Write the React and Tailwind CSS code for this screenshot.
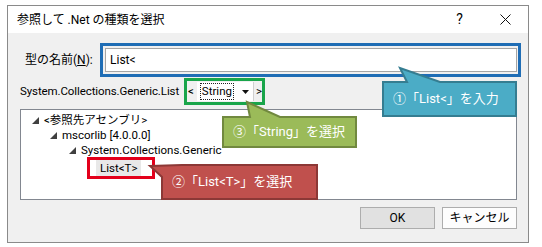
const font = { fontFamily: 'Roboto, "Noto Sans CJK JP", sans-serif' };

function TreeArrow() {
  return (
    <svg width="7" height="7" viewBox="0 0 7 7" className="shrink-0">
      <polygon points="7,0 7,7 0,7" fill="#404040" />
    </svg>
  );
}

function TreeRow({ indent, children }) {
  return (
    <div className="flex items-center h-[15px]" style={{ paddingLeft: indent }}>
      <TreeArrow />
      <span className="ml-[5px] leading-[13px]">{children}</span>
    </div>
  );
}

function Callouts() {
  return (
    <>
      <svg className="absolute inset-0 pointer-events-none" width="542" height="247">
        <polygon
          points="383,82 407,82 400,68 440,82 516,82 516,116 383,116"
          fill="#4bacc6"
          stroke="#357d91"
          strokeWidth="2"
        />
        <polygon
          points="223,117 250,117 247,102 280,117 356,117 356,147 223,147"
          fill="#9bbb59"
          stroke="#71893f"
          strokeWidth="2"
        />
        <polygon
          points="150,166 182,165 317,165 317,199 162,199 162,177"
          fill="#c0504d"
          stroke="#8c3836"
          strokeWidth="2"
        />
      </svg>
      <div className="absolute left-[383px] top-[82px] w-[133px] h-[34px] flex items-center pl-[10px] text-white text-[13px] whitespace-nowrap">
        ①「List&lt;」を入力
      </div>
      <div className="absolute left-[223px] top-[117px] w-[133px] h-[30px] flex items-center pl-[10px] text-white text-[13px] whitespace-nowrap">
        ③「String」を選択
      </div>
      <div className="absolute left-[162px] top-[165px] w-[155px] h-[34px] flex items-center pl-[10px] text-white text-[13px] whitespace-nowrap">
        ②「List&lt;T&gt;」を選択
      </div>
    </>
  );
}

export default function App() {
  return (
    <div className="relative w-[542px] h-[247px] bg-white overflow-hidden text-[12px] text-black" style={font}>
      <div className="ml-[7px] mt-[5px] w-[522px] h-[238px] border border-[#8a8a8a] flex flex-col">
        {/* title bar */}
        <div className="h-[27px] bg-white flex items-center shrink-0">
          <div className="pl-[9px] whitespace-nowrap">参照して .Net の種類を選択</div>
          <div className="ml-auto flex h-full">
            <div className="w-[45px] flex items-center justify-center text-[14px]">?</div>
            <div className="w-[46px] flex items-center justify-center">
              <svg width="11" height="11" viewBox="0 0 11 11">
                <path d="M0.5 0.5 L10.5 10.5 M10.5 0.5 L0.5 10.5" stroke="#111" strokeWidth="1" />
              </svg>
            </div>
          </div>
        </div>

        {/* body */}
        <div className="flex-1 bg-[#f0f0f0] flex flex-col">
          <div className="mt-[10px] flex items-center h-[34px]">
            <div className="w-[92px] pl-[17px] whitespace-nowrap">
              型の名前(<span className="underline">N</span>):
            </div>
            <div className="w-[421px] h-[34px] border-[3px] border-[#1f6db5] p-[2px] pr-[1px]">
              <div className="h-full bg-white border border-[#a5a5a5] flex items-center pl-[4px]">List&lt;</div>
            </div>
          </div>

          <div className="mt-[1px] h-[27px] flex items-center text-[11.5px]">
            <div className="w-[176px] pl-[12px] whitespace-nowrap tracking-[-0.1px]">System.Collections.Generic.List</div>
            <div className="w-[81px] h-[27px] border-[3px] border-[#19a54a] flex items-center pl-[1px]">
              <span>&lt;</span>
              <div className="ml-[3px] w-[59px] h-[19px] bg-white flex items-center border-r border-[#d0d0d0]">
                <span className="ml-[3px] px-[1px] leading-[15px] border border-dotted border-[#222]">String</span>
                <svg width="7" height="4" viewBox="0 0 7 4" className="ml-auto mr-[4px]">
                  <polygon points="0,0 7,0 3.5,4" fill="#111" />
                </svg>
              </div>
              <span className="ml-[2px]">&gt;</span>
            </div>
          </div>

          <div className="mt-[4px] ml-[12px] mr-[11px] h-[91px] border border-[#828790] bg-white pt-[3px] text-[11.5px]">
            <TreeRow indent={11}>&lt;参照先アセンブリ&gt;</TreeRow>
            <TreeRow indent={29}>mscorlib [4.0.0.0]</TreeRow>
            <TreeRow indent={48}>System.Collections.Generic</TreeRow>
            <div className="-mt-[1px] pl-[66px] flex">
              <div className="w-[68px] h-[22px] border-[3px] border-[#e3001b] flex items-center pl-[6px]">
                <span className="bg-[#e8e8e8] px-[4px] leading-[16px]">List&lt;T&gt;</span>
              </div>
            </div>
          </div>

          <div className="mt-[7px] flex justify-end gap-[7px] pr-[11px]">
            <div className="w-[75px] h-[22px] bg-[#e1e1e1] border border-[#adadad] flex items-center justify-center">OK</div>
            <div className="w-[75px] h-[22px] bg-[#fdfdfd] border border-[#adadad] flex items-center justify-center">キャンセル</div>
          </div>
        </div>
      </div>
      <Callouts />
    </div>
  );
}
